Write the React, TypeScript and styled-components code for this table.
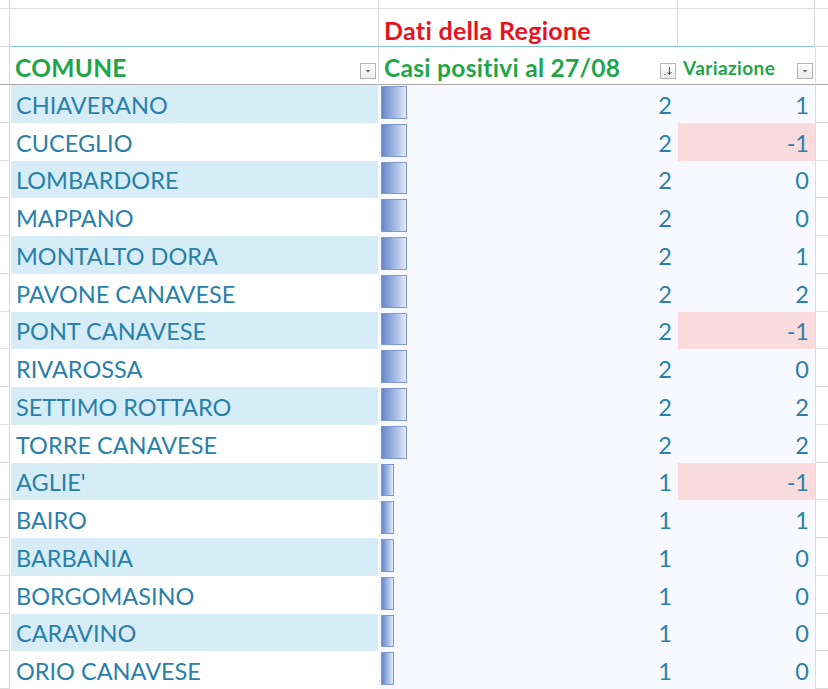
import styled, { createGlobalStyle } from "styled-components";
import { Fragment } from "react";

const GlobalStyle = createGlobalStyle`
  html, body {
    margin: 0;
    padding: 0;
    background: #ffffff;
    overflow: hidden;
  }
  body {
    font-family: Lato, "Open Sans", sans-serif;
  }
`;

type Row = { comune: string; casi: number; variazione: number };

const rows: Row[] = [
  { comune: "CHIAVERANO", casi: 2, variazione: 1 },
  { comune: "CUCEGLIO", casi: 2, variazione: -1 },
  { comune: "LOMBARDORE", casi: 2, variazione: 0 },
  { comune: "MAPPANO", casi: 2, variazione: 0 },
  { comune: "MONTALTO DORA", casi: 2, variazione: 1 },
  { comune: "PAVONE CANAVESE", casi: 2, variazione: 2 },
  { comune: "PONT CANAVESE", casi: 2, variazione: -1 },
  { comune: "RIVAROSSA", casi: 2, variazione: 0 },
  { comune: "SETTIMO ROTTARO", casi: 2, variazione: 2 },
  { comune: "TORRE CANAVESE", casi: 2, variazione: 2 },
  { comune: "AGLIE'", casi: 1, variazione: -1 },
  { comune: "BAIRO", casi: 1, variazione: 1 },
  { comune: "BARBANIA", casi: 1, variazione: 0 },
  { comune: "BORGOMASINO", casi: 1, variazione: 0 },
  { comune: "CARAVINO", casi: 1, variazione: 0 },
  { comune: "ORIO CANAVESE", casi: 1, variazione: 0 },
];

const GRID = "#dcdcdc";
const TEXT = "#2a80a8";

const Sheet = styled.div`
  display: grid;
  grid-template-columns: 10px 369px 299px 137px 13px;
  grid-template-rows: 9px 38px 38px repeat(16, 37.75px);
  width: 828px;
  height: 689px;
`;

const Cell = styled.div<{ $line?: string; $right?: boolean; $left?: boolean }>`
  box-sizing: border-box;
  border-bottom: 1px solid ${(p) => p.$line || GRID};
  border-right: ${(p) => (p.$right ? `1px solid ${GRID}` : "none")};
  border-left: ${(p) => (p.$left ? `1px solid ${GRID}` : "none")};
`;

const GroupTitle = styled(Cell)`
  display: flex;
  align-items: center;
  padding: 4px 0 0 5px;
  color: #e8121c;
  font-weight: 700;
  font-size: 25px;
  letter-spacing: 0.3px;
  white-space: nowrap;
`;

const HeadCell = styled(Cell)<{ $small?: boolean }>`
  display: flex;
  align-items: center;
  justify-content: space-between;
  padding: 4px 2px 0 5px;
  color: #1fa64a;
  font-weight: 700;
  font-size: ${(p) => (p.$small ? "19px" : "24.5px")};
  letter-spacing: ${(p) => (p.$small ? "0.4px" : "0.3px")};
  white-space: nowrap;
`;

const FilterButton = styled.span`
  width: 16px;
  height: 16px;
  margin-top: 6px;
  box-sizing: border-box;
  border: 1px solid #b4b4b4;
  background: linear-gradient(#ffffff, #ececec);
  display: flex;
  align-items: center;
  justify-content: center;
`;

const NameCell = styled.div<{ $band: boolean }>`
  display: flex;
  align-items: center;
  padding: 2px 0 0 5px;
  margin-left: 1px;
  margin-right: 1px;
  background: ${(p) => (p.$band ? "#d6edf8" : "#ffffff")};
  color: ${TEXT};
  font-size: 23.5px;
  white-space: nowrap;
`;

const ValueCell = styled.div<{ $neg?: boolean }>`
  position: relative;
  display: flex;
  align-items: center;
  justify-content: flex-end;
  padding: 2px 6px 0 0;
  background: ${(p) => (p.$neg ? "#fbdcde" : "#f8f9fe")};
  color: ${TEXT};
  font-size: 23.5px;
`;

const DataBar = styled.span<{ $w: number }>`
  position: absolute;
  left: 2px;
  top: 1px;
  bottom: 4px;
  width: ${(p) => p.$w}px;
  box-sizing: border-box;
  border: 1px solid #7f99cf;
  background: linear-gradient(to right, #6487c9, #b9c9ea 70%, #e4eaf7);
`;

const Gutter = styled(Cell)``;

const DownArrow = () => (
  <svg width="8" height="6" viewBox="0 0 8 6">
    <path d="M1.5 2h5L4 4.5z" fill="#6b6b6b" />
  </svg>
);

const SortArrow = () => (
  <svg width="12" height="12" viewBox="0 0 12 12">
    <path d="M7.5 2v7M5.5 7l2 2.5 2-2.5" stroke="#555" strokeWidth="1" fill="none" />
    <path d="M2 9.5h1.5" stroke="#777" strokeWidth="1" />
  </svg>
);

export default function App() {
  return (
    <>
      <GlobalStyle />
      <Sheet>
        {/* top partial row */}
        <Gutter $right />
        <Cell $right />
        <Cell $right />
        <Cell $right />
        <Cell />

        {/* group title row */}
        <Gutter $right />
        <Cell $right $line="#86c4d8" />
        <GroupTitle $right $line="#86c4d8">
          Dati della Regione
        </GroupTitle>
        <Cell $right $line="#86c4d8" />
        <Cell />

        {/* header row */}
        <Gutter $right $line="#a9a9a9" />
        <HeadCell $line="#a9a9a9" $right>
          COMUNE
          <FilterButton>
            <DownArrow />
          </FilterButton>
        </HeadCell>
        <HeadCell $line="#a9a9a9">
          Casi positivi al 27/08
          <FilterButton>
            <SortArrow />
          </FilterButton>
        </HeadCell>
        <HeadCell $line="#a9a9a9" $small>
          Variazione
          <FilterButton>
            <DownArrow />
          </FilterButton>
        </HeadCell>
        <Gutter $left $line="#a9a9a9" />

        {rows.map((r, i) => (
          <Fragment key={r.comune}>
            <Gutter $right />
            <NameCell $band={i % 2 === 0}>{r.comune}</NameCell>
            <ValueCell>
              <DataBar $w={r.casi === 2 ? 26 : 13} />
              {r.casi}
            </ValueCell>
            <ValueCell $neg={r.variazione < 0}>{r.variazione}</ValueCell>
            <Gutter $left />
          </Fragment>
        ))}
      </Sheet>
    </>
  );
}
